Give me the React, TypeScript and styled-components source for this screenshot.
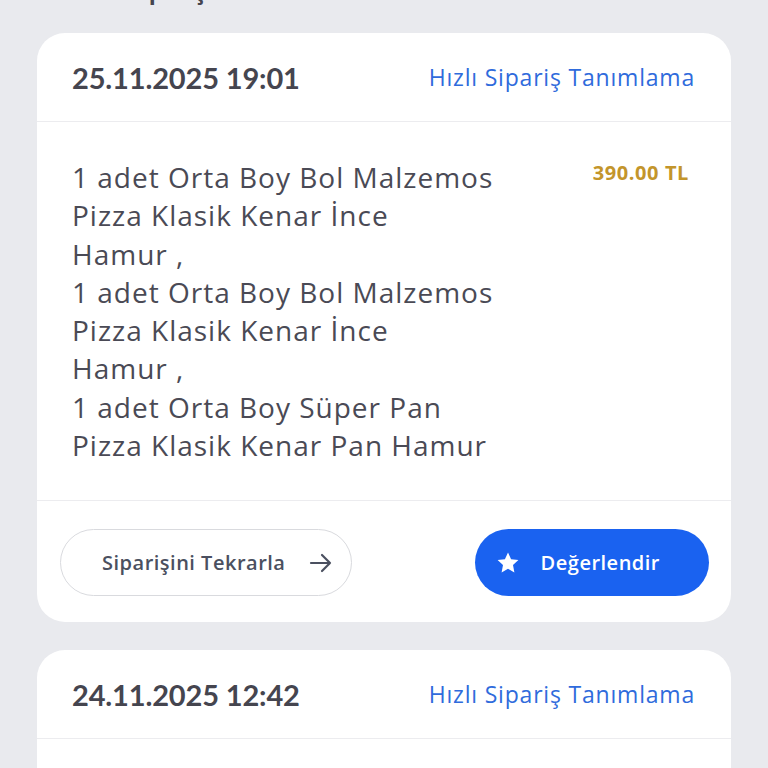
import React from 'react';
import styled, { createGlobalStyle } from 'styled-components';

const GlobalStyle = createGlobalStyle`
  html, body {
    margin: 0;
    padding: 0;
    background: #e9eaee;
  }
  body {
    font-family: "Open Sans", "Noto Sans", sans-serif;
    -webkit-font-smoothing: antialiased;
  }
`;

type Order = {
  date: string;
  price: string;
  items: string;
};

const orders: Order[] = [
  {
    date: '25.11.2025 19:01',
    price: '390.00 TL',
    items:
      '1 adet Orta Boy Bol Malzemos\nPizza Klasik Kenar İnce\nHamur ,\n1 adet Orta Boy Bol Malzemos\nPizza Klasik Kenar İnce\nHamur ,\n1 adet Orta Boy Süper Pan\nPizza Klasik Kenar Pan Hamur',
  },
  {
    date: '24.11.2025 12:42',
    price: '289.00 TL',
    items: '1 adet Orta Boy Karışık Pizza\nKlasik Kenar İnce Hamur',
  },
];

const StarIcon = () => (
  <svg width="24" height="24" viewBox="0 0 24 24" fill="#fff">
    <path d="M12 1.5l3.1 6.7 7.3.9-5.4 5 1.4 7.3L12 17.8l-6.4 3.6 1.4-7.3-5.4-5 7.3-.9z" />
  </svg>
);

const ArrowIcon = () => (
  <svg width="24" height="24" viewBox="0 0 24 24" fill="none" stroke="#4b5060" strokeWidth="2.2" strokeLinecap="round" strokeLinejoin="round">
    <path d="M2 12h19M13 4l8 8-8 8" />
  </svg>
);

export default function App() {
  return (
    <>
      <GlobalStyle />
      <Page>
        <PageTitle>Tüm Siparişler</PageTitle>
        <List>
          {orders.map((order) => (
            <Card key={order.date}>
              <CardHeader>
                <DateText>{order.date}</DateText>
                <QuickLink>Hızlı Sipariş Tanımlama</QuickLink>
              </CardHeader>
              <CardBody>
                <Items>{order.items}</Items>
                <Price>{order.price}</Price>
              </CardBody>
              <CardFooter>
                <RepeatButton>
                  Siparişini Tekrarla
                  <ArrowIcon />
                </RepeatButton>
                <RateButton>
                  <StarIcon />
                  Değerlendir
                </RateButton>
              </CardFooter>
            </Card>
          ))}
        </List>
      </Page>
    </>
  );
}

const Page = styled.div`
  height: 768px;
  overflow: hidden;
  padding: 0 37px;
  box-sizing: border-box;
`;

const PageTitle = styled.h1`
  margin: -26px 0 0 35px;
  height: 32px;
  font-size: 23px;
  font-weight: 700;
  line-height: 32px;
  color: #45454f;
`;

const List = styled.div`
  display: flex;
  flex-direction: column;
  gap: 28px;
  margin-top: 27px;
`;

const Card = styled.div`
  background: #fff;
  border-radius: 28px;
  overflow: hidden;
`;

const CardHeader = styled.div`
  display: flex;
  align-items: center;
  justify-content: space-between;
  height: 88px;
  padding: 0 36px 0 35px;
  border-bottom: 1.5px solid #ececef;
`;

const DateText = styled.span`
  font-family: Lato, "Open Sans", sans-serif;
  font-size: 29px;
  font-weight: 700;
  color: #45454f;
  letter-spacing: -0.15px;
`;

const QuickLink = styled.span`
  font-size: 23px;
  font-weight: 400;
  color: #2f6bdc;
  letter-spacing: 0.8px;
`;

const CardBody = styled.div`
  display: flex;
  justify-content: space-between;
  align-items: flex-start;
  padding: 36px 42px 36px 35px;
  border-bottom: 1.5px solid #ececef;
`;

const Items = styled.div`
  white-space: pre-line;
  font-size: 28px;
  line-height: 38.3px;
  color: #4a4a55;
  letter-spacing: 1px;
`;

const Price = styled.span`
  margin-top: 1px;
  font-size: 20px;
  font-weight: 700;
  color: #c3952b;
  letter-spacing: 0.6px;
`;

const CardFooter = styled.div`
  display: flex;
  align-items: center;
  justify-content: space-between;
  padding: 28px 22px 26px 23px;
`;

const PillButton = styled.button`
  display: flex;
  align-items: center;
  height: 67px;
  border-radius: 34px;
  font-family: inherit;
  font-size: 20px;
  font-weight: 600;
  letter-spacing: 0.5px;
  cursor: pointer;
`;

const RepeatButton = styled(PillButton)`
  gap: 24px;
  padding: 0 18px 0 41px;
  background: #fff;
  border: 1.5px solid #d9dade;
  color: #4b5060;
`;

const RateButton = styled(PillButton)`
  gap: 21px;
  padding: 0 49px 0 21px;
  background: #1a62f0;
  border: none;
  color: #fff;
`;
